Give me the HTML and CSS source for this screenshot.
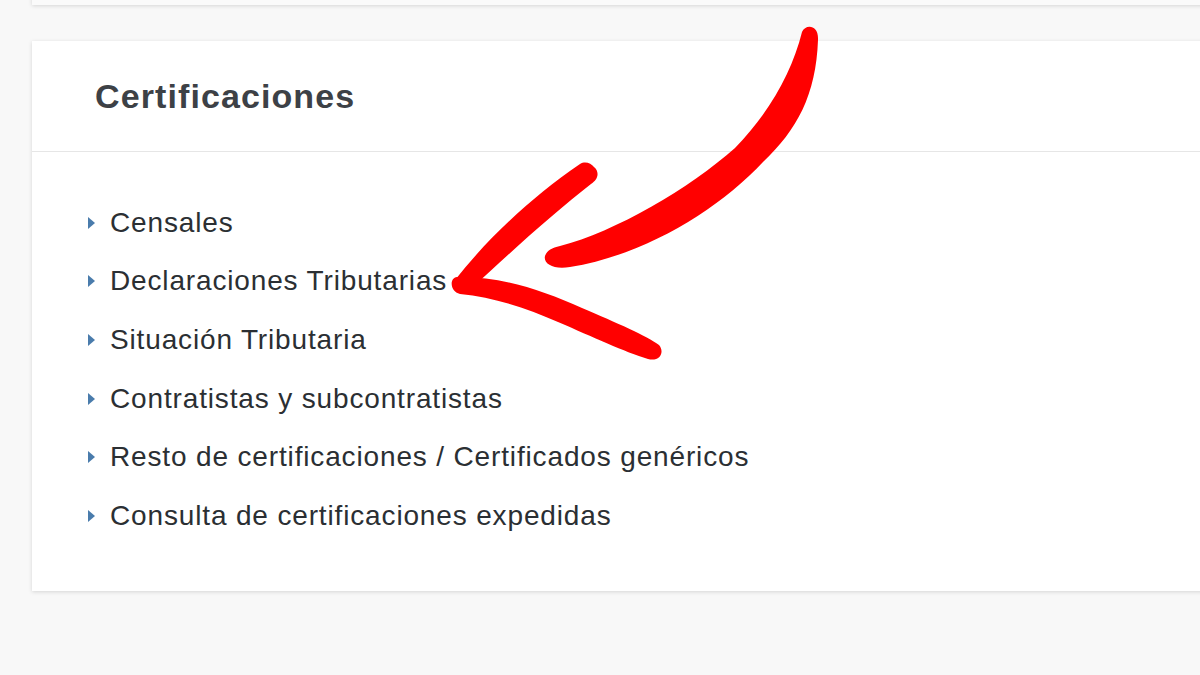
FILE: index.html
```html
<!DOCTYPE html>
<html lang="es">
<head>
<meta charset="utf-8">
<title>Certificaciones</title>
<link rel="stylesheet" href="styles.css">
</head>
<body>
<div class="page">
  <div class="card card-top"></div>
  <section class="card card-main">
    <header class="card-header">
      <h2 class="card-title">Certificaciones</h2>
    </header>
    <ul class="link-list">
      <li class="link-item"><span class="bullet"></span><a href="#">Censales</a></li>
      <li class="link-item"><span class="bullet"></span><a href="#">Declaraciones Tributarias</a></li>
      <li class="link-item"><span class="bullet"></span><a href="#">Situación Tributaria</a></li>
      <li class="link-item"><span class="bullet"></span><a href="#">Contratistas y subcontratistas</a></li>
      <li class="link-item"><span class="bullet"></span><a href="#">Resto de certificaciones / Certificados genéricos</a></li>
      <li class="link-item"><span class="bullet"></span><a href="#">Consulta de certificaciones expedidas</a></li>
    </ul>
  </section>
</div>
<svg class="arrow" width="1200" height="675" viewBox="0 0 1200 675" xmlns="http://www.w3.org/2000/svg">
  <path fill="#f00" d="M802 32 C805 24 819 24 818 40 C816 95 797 130 763 162 C718 210 645 255 570 267 C554 270 543 264 545 256 C547 250 552 248 560 246 C615 232 690 188 735 148 C770 112 792 72 802 32 Z"/>
  <path fill="#f00" d="M594 167 C600 172 598 180 591 184 C555 212 515 248 472 288 C462 294 452 288 455 280 C488 238 533 196 580 164 C585 161 591 163 594 167 Z"/>
  <path fill="#f00" d="M457 277 C500 276 542 290 582 308 C617 323 647 336 659 345 C665 352 660 362 648 359 C625 352 593 337 558 322 C528 309 494 297 460 294 C450 292 449 278 457 277 Z"/>
</svg>
</body>
</html>
```
FILE: styles.css
```css
html, body {
  margin: 0;
  padding: 0;
}
body {
  background: #f8f8f8;
  width: 1200px;
  height: 675px;
  overflow: hidden;
  position: relative;
  font-family: "Liberation Sans", Arial, sans-serif;
}
.page {
  display: flex;
  flex-direction: column;
  padding-left: 32px;
  margin-top: -40px;
}
.card {
  background: #fff;
  box-shadow: 0 1px 4px rgba(0, 0, 0, 0.14);
  margin-right: -40px;
}
.card-top {
  height: 45px;
  background: #fafafa;
}
.card-main {
  margin-top: 36px;
}
.card-header {
  height: 110px;
  border-bottom: 1px solid #e6e6e6;
  display: flex;
  align-items: center;
  padding-left: 63px;
}
.card-title {
  margin: 0;
  font-size: 34px;
  font-weight: bold;
  color: #3d4146;
  letter-spacing: 1.1px;
}
.link-list {
  list-style: none;
  margin: 0;
  padding: 41.5px 0 45.5px 56px;
}
.link-item {
  display: flex;
  align-items: center;
  height: 58.6px;
}
.bullet {
  width: 0;
  height: 0;
  border-top: 6px solid transparent;
  border-bottom: 6px solid transparent;
  border-left: 7px solid #4a7cac;
  margin-right: 15px;
}
.link-item a {
  color: #2b2f33;
  text-decoration: none;
  font-size: 28px;
  letter-spacing: 0.85px;
}
.arrow {
  position: absolute;
  left: 0;
  top: 0;
  pointer-events: none;
}
```
